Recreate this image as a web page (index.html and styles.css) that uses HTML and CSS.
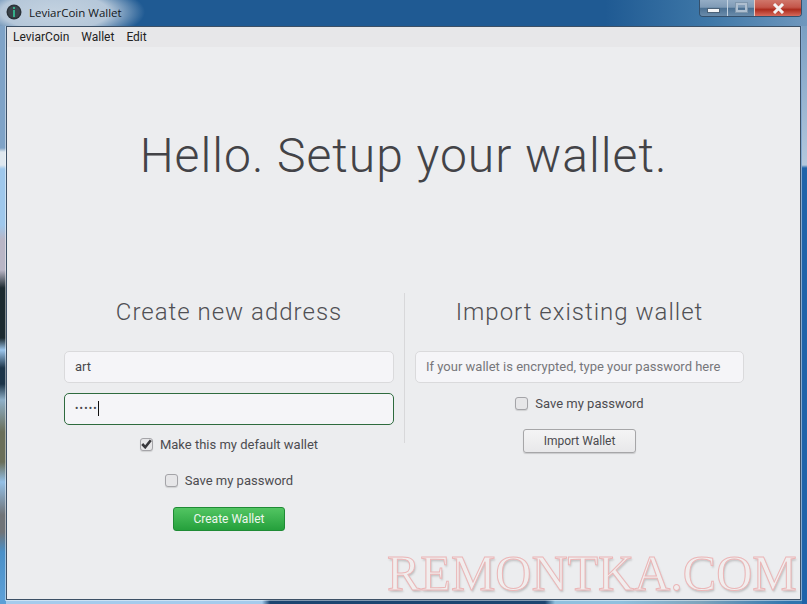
FILE: index.html
```html
<!DOCTYPE html>
<html lang="en">
<head>
    <meta charset="UTF-8">
    <title>LeviarCoin Wallet</title>
    <link rel="stylesheet" href="styles.css">
</head>
<body>
    <div class="titlebar">
        <svg class="app-icon" width="16" height="16" viewBox="0 0 16 16">
            <circle cx="8" cy="8" r="7.5" fill="#2b3238"/>
            <circle cx="8" cy="8" r="6" fill="#3a434a"/>
            <rect x="7" y="3" width="2" height="2" fill="#35b08a"/>
            <rect x="7" y="6" width="2" height="7" fill="#35b08a"/>
        </svg>
        <span class="title">LeviarCoin Wallet</span>
        <div class="window-buttons">
            <div class="win-btn win-min"><span class="min-glyph"></span></div>
            <div class="win-btn win-max"><span class="max-glyph"></span></div>
            <div class="win-btn win-close">
                <svg width="13" height="11" viewBox="0 0 13 11">
                    <path d="M2 1 L11 10 M11 1 L2 10" stroke="#f4f4f4" stroke-width="3"/>
                </svg>
            </div>
        </div>
    </div>

    <div class="client">
        <nav class="menu">
            <span>LeviarCoin</span>
            <span>Wallet</span>
            <span>Edit</span>
        </nav>

        <h1>Hello. Setup your wallet.</h1>

        <div class="columns">
            <section class="col col-create">
                <h2>Create new address</h2>
                <input class="field" type="text" value="art">
                <div class="field field-focus"><span class="dots">•••••</span><span class="caret"></span></div>
                <label class="check check-default"><span class="box"><svg width="11" height="10" viewBox="0 0 11 10"><path d="M1.2 5 L4.2 8.2 L9.8 1.2" fill="none" stroke="#38383c" stroke-width="2.6"/></svg></span>Make this my default wallet</label>
                <label class="check check-save"><span class="box"></span>Save my password</label>
                <button class="btn btn-green">Create Wallet</button>
            </section>
            <section class="col col-import">
                <h2>Import existing wallet</h2>
                <input class="field" type="text" placeholder="If your wallet is encrypted, type your password here">
                <label class="check check-import"><span class="box"></span>Save my password</label>
                <button class="btn btn-plain">Import Wallet</button>
            </section>
        </div>
    </div>

    <div class="watermark">REMONTKA.COM</div>
</body>
</html>
```

FILE: styles.css
```css
/* Reset default styles */
* {
    margin: 0;
    padding: 0;
    box-sizing: border-box;
}

html, body {
    width: 807px;
    height: 604px;
    overflow: hidden;
}

body {
    position: relative;
    display: flex;
    flex-direction: column;
    font-family: 'Roboto', sans-serif;
    color: #48484c;
    background-color: #1f63a9;
    background-repeat: no-repeat;
    /* what shows of the desktop round the glass frame: left edge, right edge, bottom edge */
    background-image:
        linear-gradient(180deg, #7fa3c7 0, #7fa3c7 148px, #dfe8ef 152px, #dfe8ef 165px, #9fc8ec 169px, #9fc8ec 225px,
            #b9b6c6 240px, #b9b6c6 270px, #1c2a30 288px, #1c2a30 338px, #9cc6ec 350px, #1c3448 368px, #1c3448 384px,
            #8fb0c8 400px, #6a6f5a 432px, #6a6f5a 462px, #94c0e6 482px, #707478 515px, #707478 532px, #4a90c8 552px, #5c9fd6 598px),
        linear-gradient(180deg, #6f97bd 0, #b3c8dd 165px, #1f63a9 168px),
        linear-gradient(90deg, #a5cbec 0, #a5cbec 262px, #1c4570 270px, #1c4570 545px, #8fc0de 555px, #8fc0de 620px, #7ea4bc 700px, #2f74ae 790px);
    background-size: 6px 604px, 5px 604px, 807px 5px;
    background-position: left top, right top, left bottom;
}

/* Window frame */
.titlebar {
    position: relative;
    flex: 0 0 26px;
    display: flex;
    align-items: center;
    padding: 0 0 2px 6px;
    background: radial-gradient(ellipse 90px 30px at 55px 12px, #c3d2e0 0, #b5c7d9 60%, rgba(120, 160, 200, 0) 100%),
        linear-gradient(90deg, #1f5a93 0, #1f5a93 75%, #3f78a8 88%, #6f97bd 100%);
}

.app-icon {
    margin-right: 7px;
}

.title {
    font-family: 'Open Sans', sans-serif;
    font-size: 11.5px;
    color: #15181c;
}

.window-buttons {
    position: absolute;
    top: 0;
    left: 699px;
    display: flex;
    height: 17px;
    border: 1px solid #34506c;
    border-top: 0;
    border-radius: 0 0 4px 4px;
    overflow: hidden;
}

.win-btn {
    display: flex;
    align-items: center;
    justify-content: center;
    height: 16px;
}

.win-min,
.win-max {
    background: linear-gradient(#94adc5 0, #7f9bb6 45%, #4c7193 52%, #6a8cab 100%);
}

.win-min {
    width: 28px;
    border-right: 1px solid #c3d2e0;
}

.win-max {
    width: 26px;
}

.win-close {
    width: 47px;
    background: linear-gradient(#d0766a 0, #c4564a 45%, #ad2c1e 60%, #d66a5c 100%);
    border-left: 1px solid #e8c8c0;
}

.min-glyph {
    width: 13px;
    height: 5px;
    margin-top: 4px;
    background: #f2f4f6;
    border: 1px solid #4b6278;
}

.max-glyph {
    width: 11px;
    height: 9px;
    margin-top: -1px;
    border: 2px solid #aebfd0;
    outline: 1px solid #7f97ad;
}

.client {
    flex: 0 0 574px;
    margin: 0 6px;
    background: #ecedef;
    border: 1px solid #3c5066;
    box-shadow: 0 0 0 1px rgba(255, 255, 255, 0.45);
}

.menu {
    display: flex;
    gap: 12px;
    height: 20px;
    align-items: center;
    padding: 0 6px;
    font-size: 12px;
    color: #222;
    background: #e7e7e9;
}

h1 {
    margin-top: 77px;
    font-size: 48px;
    font-weight: 300;
    line-height: 64px;
    letter-spacing: 1px;
    text-align: center;
    color: #434347;
}

.columns {
    display: flex;
    margin: 105px 0 0 57px;
}

.col {
    display: flex;
    flex-direction: column;
    align-items: center;
}

.col-create {
    width: 341px;
    height: 150px;
    padding-right: 10px;
    border-right: 1px solid #d8d8da;
}

.col-import {
    width: 339px;
    padding-left: 10px;
}

h2 {
    margin-bottom: 22px;
    padding-top: 3px;
    font-size: 24px;
    font-weight: 300;
    line-height: 33px;
    letter-spacing: 1px;
    color: #505054;
}

.field {
    display: flex;
    align-items: center;
    flex: none;
    width: 100%;
    height: 32px;
    padding: 0 10px 1px;
    font-family: inherit;
    font-size: 13px;
    color: #48484c;
    background: #f5f5f8;
    border: 1px solid #dadadc;
    border-radius: 5px;
    outline: none;
}

.field::placeholder {
    color: #77777b;
    opacity: 1;
}

.field-focus {
    margin-top: 10px;
    border-color: #2e6b3e;
}

.dots {
    font-size: 10px;
    letter-spacing: 1.2px;
}

.caret {
    width: 1px;
    height: 15px;
    background: #111;
}

.check {
    display: flex;
    flex: none;
    align-items: center;
    gap: 7px;
    height: 20px;
    font-size: 13px;
    color: #4c4c50;
}

.box {
    display: flex;
    align-items: center;
    justify-content: center;
    width: 13px;
    height: 13px;
    background: #e6e6e8;
    border: 1px solid #a4a4a8;
    border-radius: 3px;
    box-shadow: 0 1px 1px rgba(0, 0, 0, 0.12);
}

.check-default {
    margin-top: 9px;
}

.check-save {
    margin-top: 16px;
}

.check-import {
    margin-top: 10px;
}

.btn {
    flex: none;
    width: 112px;
    height: 24px;
    font-family: inherit;
    font-size: 12px;
    border-radius: 3px;
}

.btn-green {
    margin-top: 17px;
    color: #eef7ee;
    background: linear-gradient(#52c562, #25a03c);
    border: 1px solid #1f8b35;
}

.btn-plain {
    margin-top: 16px;
    width: 113px;
    color: #4a4a4e;
    background: linear-gradient(#f4f4f5, #e8e8ea);
    border: 1px solid #a6a6a8;
    box-shadow: 0 1px 1px rgba(0, 0, 0, 0.15);
}

/* Site watermark lying over the window */
.watermark {
    position: absolute;
    left: 387px;
    top: 544px;
    font-family: 'Liberation Serif', serif;
    font-size: 50px;
    line-height: 58px;
    white-space: nowrap;
    color: #f1eeee;
    -webkit-text-stroke: 1px #ebb6b7;
    text-shadow: 1px 2px 2px rgba(90, 90, 90, 0.3);
}
```
